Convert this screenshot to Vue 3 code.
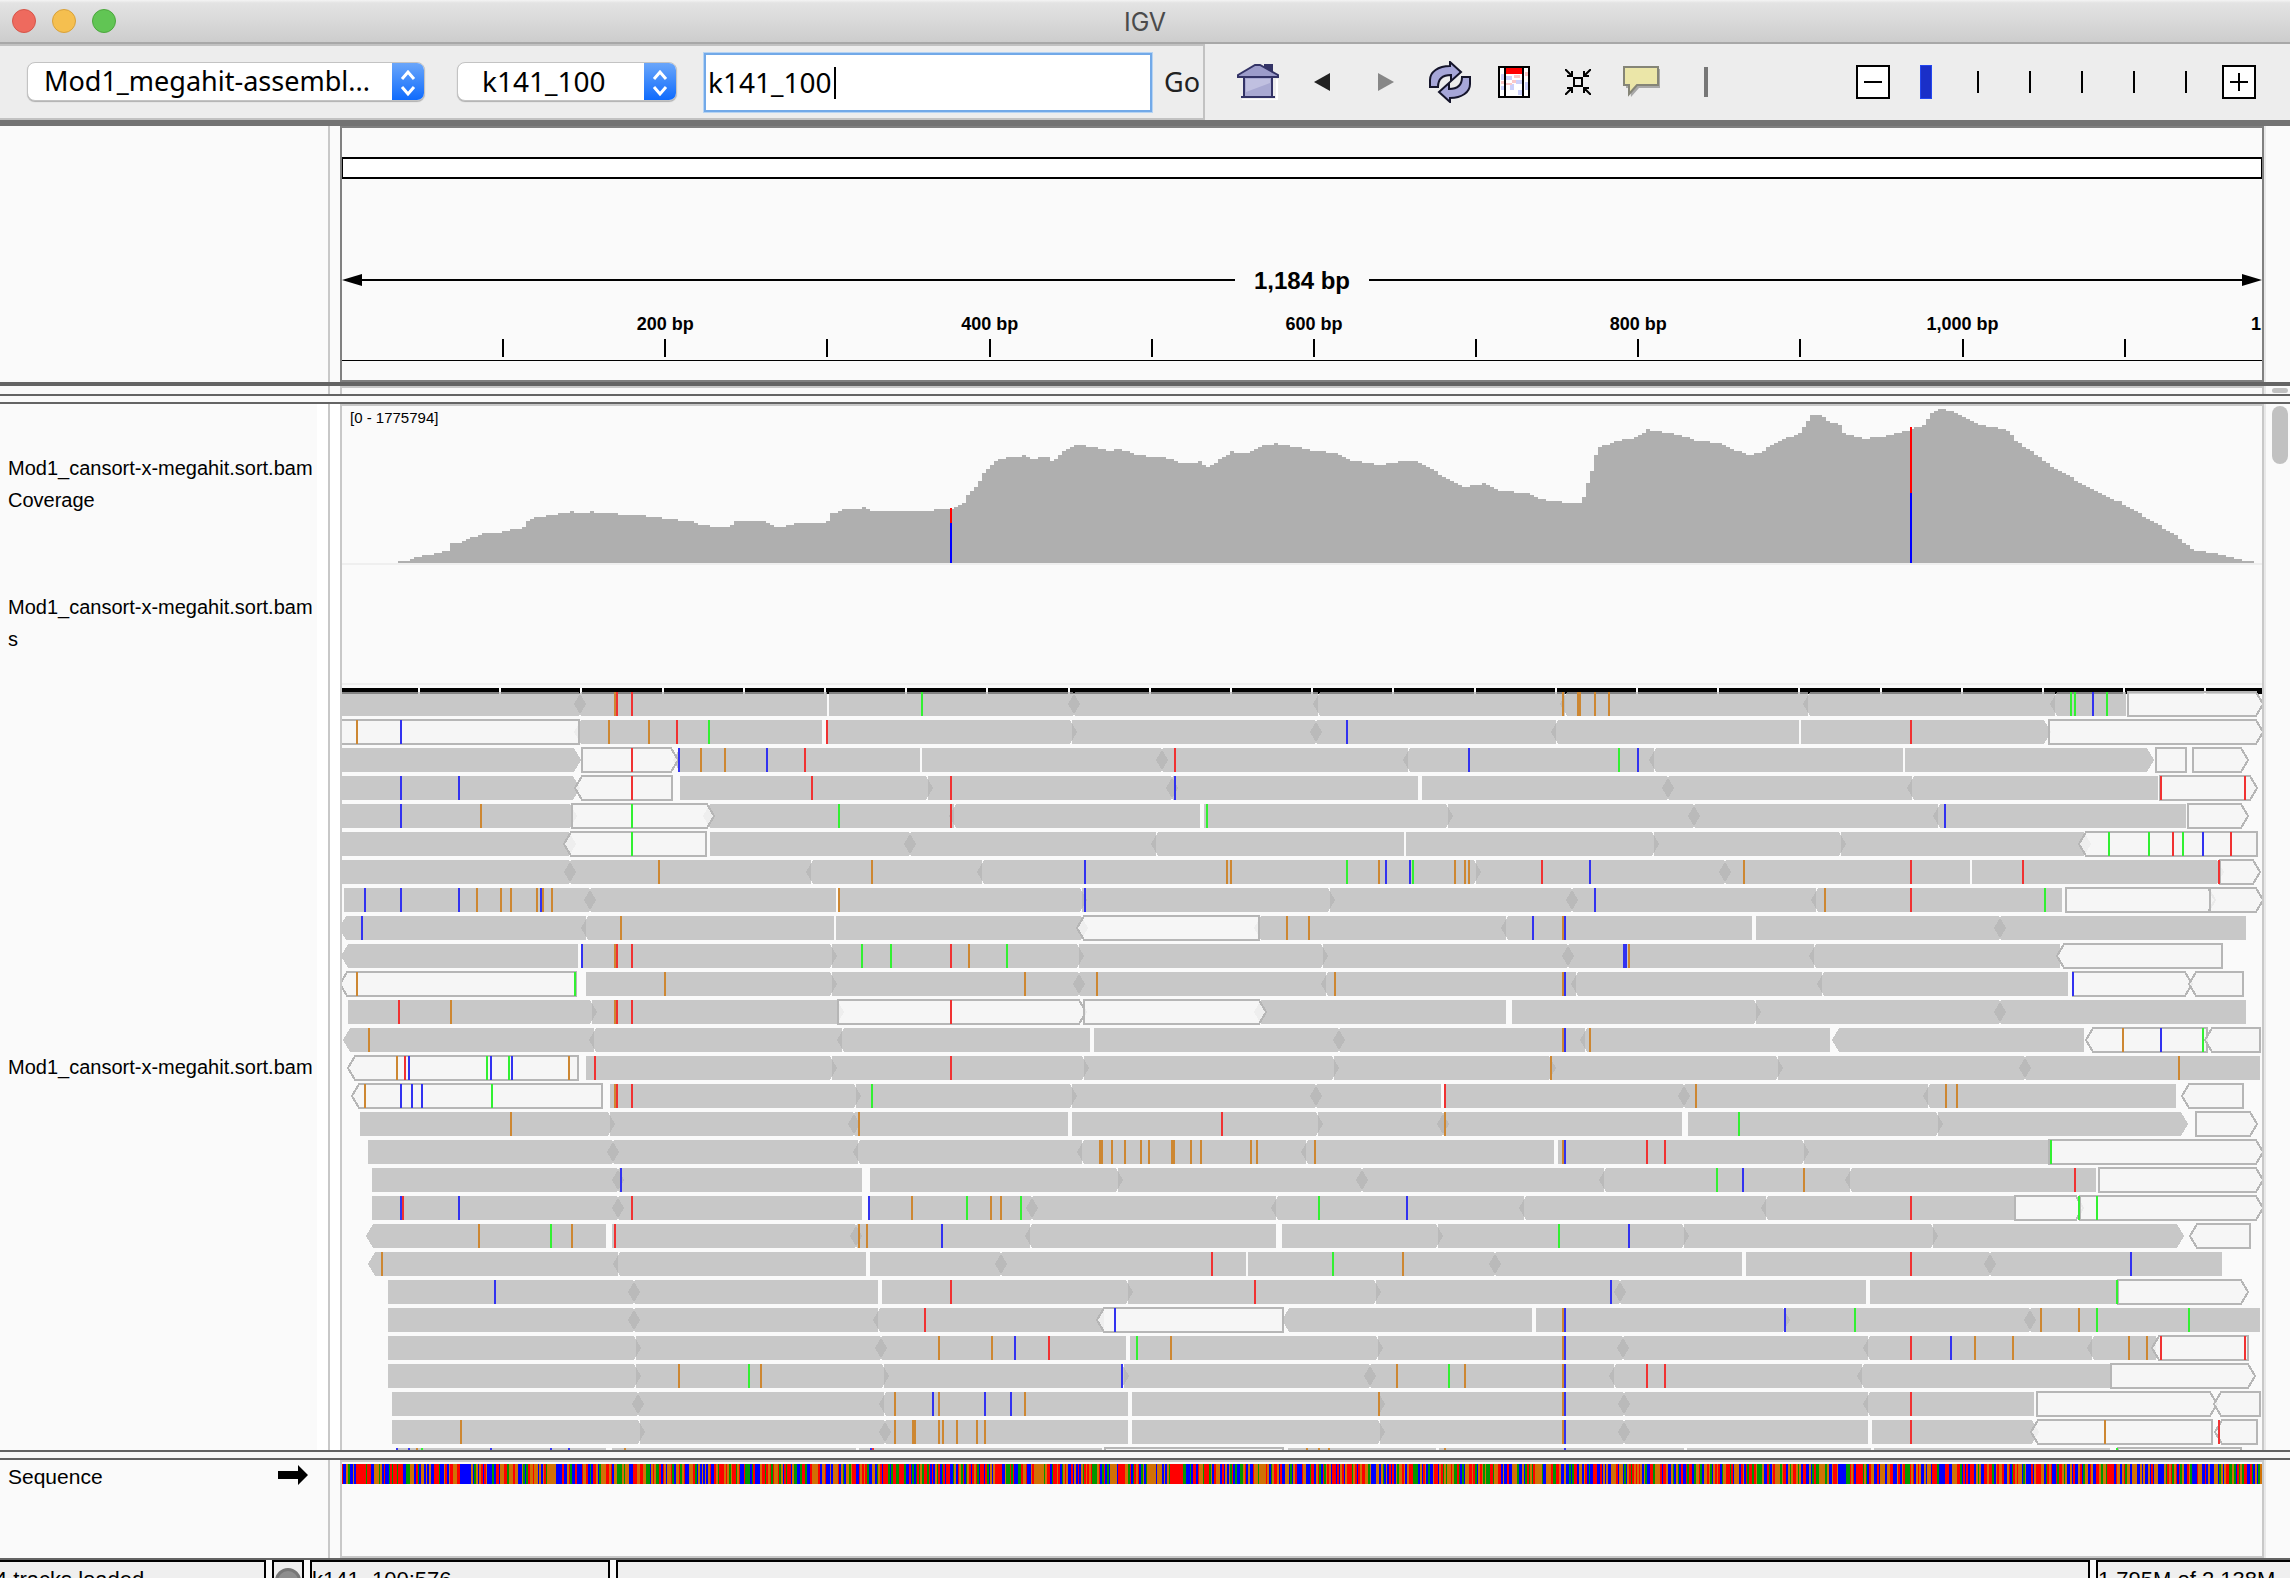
<script setup>
import { ref } from 'vue'

const genome = ref('Mod1_megahit-assembl...')
const contig = ref('k141_100')
const locus = ref('k141_100')
const zoom = ref(0)

const SPAN = 1184
const VIEW = 1920
const rulerTicks = Array.from({ length: 12 }, (_, i) => (i + 1) * 100).map((bp) => ({
  bp,
  left: (bp / SPAN) * 100 + '%',
  label: bp % 200 === 0 ? bp.toLocaleString('en-US') + ' bp' : ''
}))

/* Coverage profile: x, height pairs */
const profile = [
  [0, 0], [55, 0], [56, 1], [66, 3], [72, 5], [80, 7], [90, 9], [105, 13], [108, 19], [118, 21], [126, 25], [134, 27], [140, 29],
  [160, 31], [166, 33], [179, 35], [182, 39], [186, 43], [190, 45], [202, 47], [216, 49], [218, 51], [224, 49], [228, 51],
  [236, 49], [248, 51], [266, 49], [270, 51], [274, 49], [302, 47], [318, 45], [332, 43], [348, 41], [352, 39], [364, 37],
  [376, 35], [388, 37], [392, 41], [398, 43], [420, 41], [424, 39], [428, 37], [436, 35], [444, 37], [450, 39], [484, 41],
  [488, 49], [498, 53], [520, 55], [524, 53], [548, 51], [578, 52], [609, 55], [619, 59], [625, 69], [632, 75], [639, 88],
  [647, 96], [654, 104], [680, 107], [690, 103], [702, 107], [710, 101], [721, 112], [731, 118], [753, 116], [764, 112],
  [775, 114], [791, 109], [800, 107], [822, 105], [831, 102], [844, 99], [856, 101], [864, 96], [879, 105], [888, 111],
  [902, 110], [917, 117], [932, 119], [958, 115], [968, 112], [994, 110], [1009, 102], [1038, 98], [1053, 101], [1072, 101],
  [1086, 95], [1104, 83], [1118, 76], [1140, 79], [1155, 73], [1184, 69], [1194, 64], [1228, 60], [1238, 60], [1241, 70],
  [1248, 92], [1254, 115], [1272, 122], [1289, 125], [1304, 133], [1330, 129], [1345, 125], [1355, 122], [1374, 120], [1396, 111],
  [1403, 108], [1418, 110], [1425, 117], [1440, 124], [1454, 128], [1469, 149], [1478, 147], [1487, 139], [1495, 140],
  [1501, 129], [1520, 124], [1542, 127], [1568, 134], [1580, 137], [1587, 150], [1598, 155], [1618, 147], [1630, 140],
  [1641, 137], [1663, 134], [1673, 121], [1688, 112], [1710, 95], [1739, 79], [1776, 61], [1805, 44], [1834, 26],
  [1849, 13], [1871, 10], [1893, 4], [1915, 0], [1920, 0]
]
const BASE = 157
function heightAt(x) {
  const i = profile.findIndex((p) => p[0] >= x)
  if (i <= 0) return profile[0][1]
  const [x0, h0] = profile[i - 1]
  const [x1, h1] = profile[i]
  return h0 + ((h1 - h0) * (x - x0)) / (x1 - x0)
}
let coveragePath = `M0 ${BASE}`
for (let x = 0; x < VIEW; x += 4) {
  const h = Math.round(heightAt(x) / 2) * 2
  coveragePath += `V${BASE - h}H${x + 4}`
}
coveragePath += `V${BASE}Z`

/*
 * Read rows. "reads" holds runs of packed reads: [x flat start, <x arrow start,
 * ]x flat end, >x arrow end; between them D (both arrows overlap), L (left arrow),
 * R (right arrow) and Gx:w (a gap). "open" holds low-quality reads as x0,x1 with
 * l, r or n for the arrow side. "snps" holds the mismatched bases.
 */
const rowData = [
  { reads: '[0 D238 G485:2 D732 L976 L1223 L1466 L1713 ]1784', open: '1786,1921r', snps: 'o273 r275 r290 g580 o1221 o1236 o1238 o1253 o1267 g1729 g1733 b1751 g1765' },
  { reads: '<232 G480:5 R730 D974 L1214 G1457:2 >1709', open: '-4,237n 1707,1921r', snps: 'o15 b59 o267 o307 r335 g367 r485 b1005 r1569' },
  { reads: '[0 >239 <331 G578:2 D820 L1066 L1312 G1561:2 >1812', open: '240,336r 1814,1844n 1851,1906r', snps: 'r290 b337 o359 o383 b425 r463 r833 b1127 g1277 b1296' },
  { reads: '[0 >238 [338 R586 D830 G1076:4 D1326 L1570 ]1816', open: '233,330l 1818,1915r', snps: 'b59 b117 r290 r470 r609 b833 r1819 r1903' },
  { reads: '[0 >235 <361 L612 G858:4 R1106 D1352 L1596 ]1844', open: '230,372r 1846,1906r', snps: 'b59 o139 g290 g497 r609 g865 b1603' },
  { reads: '[0 >234 [368 D568 L814 G1062:2 R1312 R1499 >1749', open: '222,364l 1737,1915l', snps: 'g290 g1767 g1807 r1831 g1841 b1861 r1889' },
  { reads: '[0 D228 L469 L640 R1134 D1383 G1628:2 >1882', open: '1878,1918r', snps: 'o317 o530 b743 o885 o889 g1005 o1037 b1044 b1068 g1071 o1113 o1123 o1127 r1200 b1248 o1402 r1569 r1681 r1877' },
  { reads: '[2 D248 G494:2 R740 R988 D1230 L1474 ]1720', open: '1724,1873r 1868,1921r', snps: 'b23 b59 b117 o135 o159 o169 o195 o201 b199 o210 o497 b743 b1253 o1483 r1569 g1703' },
  { reads: '<-3 L244 G492:2 >746 <912 L1164 G1410:4 D1658 ]1904', open: '735,917l', snps: 'b20 o279 o945 o967 b1191 o1221 b1223' },
  { reads: '<-1 G236:4 R490 R737 R981 D1226 L1472 ]1718', open: '1715,1880l', snps: 'b240 o273 r275 r290 g520 g549 r609 o627 g665 b1282 b1284 o1287' },
  { reads: '[244 R490 D737 L984 L1234 L1480 ]1726', open: '-2,234l 1731,1850r 1847,1901l', snps: 'o15 g233 o323 o683 o755 o993 o1221 b1223 b1731' },
  { reads: '[6 R250 >502 <912 G1164:6 R1414 D1658 ]1904', open: '496,744r 742,924r', snps: 'r57 o109 o273 r275 r290 r609' },
  { reads: '<1 L252 L500 G748:4 D997 L1243 ]1488 <1490 ]1742', open: '1744,1865l 1863,1918l', snps: 'o27 o1221 b1223 o1248 o1781 b1819 g1861' },
  { reads: '[244 R490 R742 R992 R1209 R1436 D1683 ]1918', open: '6,236l', snps: 'o55 r63 b67 g145 b149 g167 b170 o227 r253 r609 o1209 o1837' },
  { reads: '[268 R514 R730 D974 G1099:3 D1342 L1586 ]1834', open: '10,260l 1840,1901l', snps: 'o23 b59 b70 b80 g150 o273 r275 r290 g530 r1103 o1354 o1604 o1615' },
  { reads: '[18 R268 D512 G726:4 R976 D1101 G1340:6 R1596 >1846', open: '1854,1915r', snps: 'o169 o517 r880 o1103 g1397' },
  { reads: '[26 D271 L516 L740 L964 G1212:4 R1462 ]1707', open: '1707,1921r', snps: 'o758 o760 o770 o783 o799 o807 o830 o832 o849 o859 o909 o915 o973 o1221 b1223 r1305 r1323 g1709' },
  { reads: '[30 D276 G520:8 R776 D1020 L1262 L1508 ]1754', open: '1757,1921r', snps: 'b279 g1375 b1401 o1462 r1733' },
  { reads: '[30 D276 G520:6 D690 L934 L1182 L1424 ]1672', open: '1673,1741r 1738,1921r', snps: 'b59 r61 b117 r290 b527 o570 g625 o649 o659 g679 g977 b1065 r1569 g1737 g1755' },
  { reads: '<24 G264:6 D514 L688 G934:6 R1096 R1342 R1591 >1842', open: '1848,1908l', snps: 'o137 g209 o230 r273 o517 o525 b600 g1217 b1287' },
  { reads: '<26 L276 G524:4 D659 G904:2 D1153 G1400:4 D1648 ]1880', open: '', snps: 'o40 r870 g991 o1061 r1569 b1789' },
  { reads: '[46 D292 G536:4 R786 R1034 D1278 G1524:4 ]1776', open: '1776,1906r', snps: 'b153 r609 r913 b1269 g1775' },
  { reads: '[46 D292 L536 ]762 <940 G1190:4 R1443 D1688 ]1918', open: '755,941l', snps: 'r583 b773 o1221 b1223 b1443 g1513 o1699 o1737 g1755 g1847' },
  { reads: '[46 R294 D539 G784:4 R1036 D1281 L1526 L1750 ]1814', open: '1810,1906l', snps: 'o597 o650 b673 r707 g795 o829 o1221 b1223 r1569 b1609 o1633 o1671 o1787 o1805 r1819 r1903' },
  { reads: '[46 R294 R542 R782 D1028 L1272 L1520 ]1768', open: '1769,1913r', snps: 'o337 g407 o419 b780 o1055 g1107 o1123 o1221 b1223 r1305 r1323' },
  { reads: '[50 D296 L542 G786:4 R1038 D1282 L1526 ]1692', open: '1695,1875r 1872,1918l', snps: 'o553 b591 o597 b643 b669 o683 o1037 o1221 b1223 r1569' },
  { reads: '[50 R298 D543 G786:4 R1038 D1282 G1526:4 >1697', open: '1689,1870l 1873,1915l', snps: 'o119 o553 o571 o573 o597 o601 o615 o635 o643 o1221 b1223 r1569 o1763 r1877' },
  { reads: '<48 G264:6 G514:3 ]760 [946 G1094:3 G1342:3 G1529:3 ]1768', open: '763,941n 1776,1899n', snps: 'b55 b67 o75 g80 b149 b209 b227 o283 b529 r531 o965 o977 o987 o1103 b1223 g1775' }
]

const TIP = 7
const H = 24
function outline(x0, x1, side) {
  if (side === 'l') return `M${x0} ${H / 2}L${x0 + TIP} 0H${x1}V${H}H${x0 + TIP}Z`
  if (side === 'r') return `M${x0} 0H${x1 - TIP}L${x1} ${H / 2}L${x1 - TIP} ${H}H${x0}Z`
  if (side === 'b') return `M${x0} ${H / 2}L${x0 + TIP} 0H${x1 - TIP}L${x1} ${H / 2}L${x1 - TIP} ${H}H${x0 + TIP}Z`
  return `M${x0} 0H${x1}V${H}H${x0}Z`
}
function parseReads(text) {
  const out = []
  let start = 0
  let arrow = false
  const close = (x, tip) => out.push(outline(start, x, arrow ? (tip ? 'b' : 'l') : tip ? 'r' : 'n'))
  const open = (x, tip) => {
    start = x
    arrow = tip
  }
  for (const token of text.split(' ')) {
    const [x, gap] = token.slice(1).split(':').map(Number)
    const kind = token[0]
    if (kind === '[') open(x, false)
    else if (kind === '<') open(x, true)
    else if (kind === ']') close(x, false)
    else if (kind === '>') close(x, true)
    else if (kind === 'D') { close(x + 6, true); open(x - 6, true) }
    else if (kind === 'L') { close(x, false); open(x - 5, true) }
    else if (kind === 'R') { close(x + 5, true); open(x, false) }
    else { close(x, false); open(x + gap, false) }
  }
  return out
}
const rows = rowData.map((row) => ({
  reads: parseReads(row.reads),
  open: row.open ? row.open.split(' ').map((t) => {
    const [x0, x1] = t.slice(0, -1).split(',').map(Number)
    return outline(x0, x1, t.slice(-1))
  }) : [],
  snps: row.snps.split(' ').map((t) => ({ base: t[0], x: Number(t.slice(1)) - 1 }))
}))
const barMarks = Array.from({ length: 23 }, (_, i) => Math.round(77 + i * 81.2))

/* Reference sequence, one coloured band per base */
const basePaths = { g: '', r: '', b: '', o: '' }
let seed = 141100
for (let i = 0; i < SPAN; i++) {
  seed = (seed * 1103515245 + 12345) % 2147483648
  const n = seed / 2147483648
  const base = n < 0.16 ? 'g' : n < 0.43 ? 'r' : n < 0.71 ? 'b' : 'o'
  const x0 = Math.floor((i * VIEW) / SPAN)
  const x1 = Math.floor(((i + 1) * VIEW) / SPAN)
  basePaths[base] += `M${x0} 0H${x1}V20H${x0}Z`
}
</script>

<template>
  <div class="window">
    <header class="titlebar">
      <div class="lights">
        <button class="light close" aria-label="Close"></button>
        <button class="light minimise" aria-label="Minimise"></button>
        <button class="light expand" aria-label="Zoom"></button>
      </div>
      <h1>IGV</h1>
    </header>

    <div class="toolbar">
      <form class="locus" @submit.prevent>
        <div class="combo genome">
          <select v-model="genome" aria-label="Genome"><option>Mod1_megahit-assembl...</option></select>
          <svg class="chev" viewBox="0 0 32 39"><path d="M10 16l6-7 6 7M10 24l6 7 6-7" /></svg>
        </div>
        <div class="combo contig">
          <select v-model="contig" aria-label="Contig"><option>k141_100</option></select>
          <svg class="chev" viewBox="0 0 32 39"><path d="M10 16l6-7 6 7M10 24l6 7 6-7" /></svg>
        </div>
        <div class="field">
          <input v-model="locus" type="text" aria-label="Locus" />
          <i class="caret"></i>
        </div>
        <button class="go" type="submit">Go</button>
      </form>

      <nav class="tools">
        <button aria-label="Home">
          <svg width="42" height="36" viewBox="0 0 42 36">
            <path d="M5 36H40V15" fill="none" stroke="#fff" stroke-width="2" />
            <path d="M28 8V1h7v10z" fill="#333366" stroke="#333366" stroke-width="2" />
            <path d="M7 13h28v20H7z" fill="#a9a9d2" stroke="#333366" stroke-width="2" />
            <path d="M9 15h24v4l-24 9z" fill="#c0c0e0" />
            <path d="M1 11L18 1h5l18 10v2H1z" fill="#9c9cca" stroke="#333366" stroke-width="2" />
            <path d="M4 33h34" stroke="#333366" stroke-width="2" />
          </svg>
        </button>
        <button aria-label="Back"><svg width="16" height="18" viewBox="0 0 16 18"><path d="M16 0v18L0 9z" fill="#222" /></svg></button>
        <button aria-label="Forward"><svg width="16" height="18" viewBox="0 0 16 18"><path d="M0 0v18l16-9z" fill="#878787" /></svg></button>
        <button aria-label="Refresh">
          <svg width="42" height="42" viewBox="0 0 42 42" fill="#a6a6d8" stroke="#15152b" stroke-width="2">
            <path d="M1 26v-7C1 11 9 5 21 5V1l11 10-10 9v-6c-8 0-13 4-13 12z" />
            <path d="M41 16v7c0 8-8 14-20 14v4L10 31l10-9v6c8 0 13-4 13-12z" />
          </svg>
        </button>
        <button aria-label="Define region">
          <svg width="32" height="32" viewBox="0 0 32 32">
            <path d="M1 1h30v30H1z" fill="#fff" />
            <path d="M8 10h6v4H8zM18 14h6v4h-6zM12 18h4v6h-4zM20 24h4v5h-4zM3 8h3v6H3zM27 16h3v8h-3zM3 20h3v4H3z" fill="#ccd0fa" />
            <path d="M16 9h6v3h-6zM8 17h6v2H8zM14 14h4v3h-4zM27 6h3v4h-3zM3 15h3v3H3z" fill="#fac8c8" />
            <path d="M8 2h16v6H8z" fill="#f00" />
            <path d="M1 1h30v30H1zM7 1v30M25 1v30" fill="none" stroke="#000" stroke-width="2" />
          </svg>
        </button>
        <button aria-label="Fit data">
          <svg width="26" height="26" viewBox="0 0 26 26" fill="none" stroke="#000" stroke-width="2">
            <path d="M9 9h8v8H9zM0 0l7 7M26 0l-7 7M0 26l7-7M26 26l-7-7M7 2v5H2M19 2v5h5M7 24v-5H2M19 24v-5h5" />
          </svg>
        </button>
        <button aria-label="Popup text">
          <svg width="38" height="32" viewBox="0 0 38 32">
            <path d="M3 3h34v19H16l-8 9-1-9H3z" fill="#a8a8a8" />
            <path d="M1 1h34v18H14l-8 9V19H1z" fill="#ebe6a8" stroke="#858577" stroke-width="2" />
          </svg>
        </button>
        <button aria-label="Center line"><svg width="4" height="30" viewBox="0 0 4 30"><path d="M0 0h4v30H0z" fill="#777" /></svg></button>
      </nav>

      <div class="zoomer">
        <button aria-label="Zoom out"><svg width="34" height="34" viewBox="0 0 34 34"><path d="M1 1h32v32H1z" /><path d="M8 17h18" /></svg></button>
        <input v-model="zoom" type="range" min="0" max="5" aria-label="Zoom level" />
        <button aria-label="Zoom in"><svg width="34" height="34" viewBox="0 0 34 34"><path d="M1 1h32v32H1z" /><path d="M8 17h18M17 8v18" /></svg></button>
      </div>
    </div>

    <section class="band ruler-band">
      <div class="names"></div>
      <div class="panel ruler">
        <div class="ideogram"></div>
        <div class="span">
          <svg width="20" height="12" viewBox="0 0 20 12"><path d="M0 6L20 0v12z" /></svg>
          <i></i><strong>1,184 bp</strong><i></i>
          <svg width="20" height="12" viewBox="0 0 20 12"><path d="M20 6L0 0v12z" /></svg>
        </div>
        <div class="scale">
          <div v-for="t in rulerTicks" :key="t.bp" class="tick" :style="{ left: t.left }">
            <span>{{ t.label }}</span><i></i>
          </div>
        </div>
      </div>
      <div class="side"></div>
    </section>

    <section class="band spare-band">
      <div class="names"></div>
      <div class="panel"></div>
      <div class="side"><i class="knob"></i></div>
    </section>
    <div class="divider"></div>

    <section class="band data-band">
      <div class="names">
        <div class="name coverage">Mod1_cansort-x-megahit.sort.bam<br />Coverage</div>
        <div class="name junctions">Mod1_cansort-x-megahit.sort.bam<br />s</div>
        <div class="name reads">Mod1_cansort-x-megahit.sort.bam</div>
      </div>
      <div class="panel">
        <div class="track coverage">
          <span class="range">[0 - 1775794]</span>
          <svg viewBox="0 0 1920 157" preserveAspectRatio="none">
            <path :d="coveragePath" fill="#afafaf" />
            <path d="M608 102h2v15h-2zM1568 21h2v66h-2z" fill="#f00" />
            <path d="M608 117h2v40h-2zM1568 87h2v70h-2z" fill="#00f" />
          </svg>
        </div>
        <div class="track junctions"></div>
        <div class="track reads">
          <svg viewBox="0 0 1920 791" preserveAspectRatio="none">
            <path d="M0 3H1920V9H0z" />
            <path v-for="x in barMarks" :key="x" :d="`M${x - 1} 3h2v6h-2z`" fill="#fafafa" />
            <g v-for="(row, i) in rows" :key="i" :transform="`translate(0 ${7 + i * 28})`">
              <path v-for="(d, k) in row.reads" :key="'r' + k" :d="d" class="read" />
              <path v-for="(d, k) in row.open" :key="'o' + k" :d="d" class="open" />
              <rect v-for="(s, k) in row.snps" :key="'s' + k" :class="s.base" :x="s.x" y="0" width="2" height="24" />
            </g>
          </svg>
        </div>
      </div>
      <div class="side"><i class="knob"></i></div>
    </section>
    <div class="divider"></div>

    <section class="band sequence-band">
      <div class="names">
        <span>Sequence</span>
        <svg width="30" height="20" viewBox="0 0 30 20"><path d="M0 6h20V0l10 10-10 10v-6H0z" /></svg>
      </div>
      <div class="panel">
        <svg viewBox="0 0 1920 20" preserveAspectRatio="none">
          <path v-for="(d, base) in basePaths" :key="base" :class="base" :d="d" />
        </svg>
      </div>
      <div class="side"></div>
    </section>

    <footer class="status">
      <div class="loaded"><span>4 tracks loaded</span></div>
      <div class="lamp"><i></i></div>
      <div class="position">k141_100:576</div>
      <div class="message"></div>
      <div class="memory">1,795M of 2,138M</div>
    </footer>
  </div>
</template>

<style>
body {
  margin: 0;
}
</style>

<style scoped>
* {
  box-sizing: border-box;
}
.window {
  height: 100vh;
  display: flex;
  flex-direction: column;
  overflow: hidden;
  background: #fafafa;
  color: #000;
  font-family: "Liberation Sans", Arial, sans-serif;
  font-size: 20px;
}
button {
  padding: 0;
  border: 0;
  background: none;
}
svg {
  display: block;
}
.titlebar {
  flex: none;
  display: grid;
  grid-template-columns: 1fr auto 1fr;
  align-items: center;
  height: 44px;
  border-bottom: 2px solid #a8a8a8;
  background: linear-gradient(#f4f4f4 0, #e3e3e3 3px, #cdcdcd);
}
.titlebar h1 {
  margin: 0;
  padding-top: 2px;
  font: 400 25px/30px Inter, sans-serif;
  color: #4b4b4b;
}
.lights {
  display: flex;
  gap: 16px;
  padding-left: 12px;
}
.light {
  width: 24px;
  height: 24px;
  border: 1px solid #d65549;
  border-radius: 50%;
  background: #ee6a5e;
}
.light.minimise {
  border-color: #d8a13a;
  background: #f5bf4f;
}
.light.expand {
  border-color: #4ca73d;
  background: #61c554;
}
.toolbar {
  flex: none;
  display: flex;
  height: 82px;
  border-bottom: 6px solid #737373;
  background: #ededed;
  font-family: "Noto Sans", sans-serif;
}
.locus {
  display: flex;
  align-items: center;
  width: 1205px;
  padding-left: 27px;
  border: 2px solid #c2c2c2;
  border-left: 0;
}
.combo {
  display: flex;
  height: 39px;
  margin-bottom: 2px;
  overflow: hidden;
  border: 1px solid #c3c3c3;
  border-radius: 8px;
  background: #fff;
  box-shadow: 0 1px 1px #b0b0b0;
}
.combo select {
  flex: 1;
  min-width: 0;
  padding: 0 0 0 16px;
  border: 0;
  appearance: none;
  background: none;
  color: #000;
  font: 27px/36px "Noto Sans", sans-serif;
}
.combo.genome {
  width: 398px;
  margin-right: 32px;
}
.combo.contig {
  width: 220px;
  margin-right: 27px;
}
.combo.contig select {
  padding-left: 24px;
  font-size: 28px;
}
.chev {
  flex: none;
  width: 32px;
  height: 39px;
  background: linear-gradient(#6aa6fa, #0a68fd);
  fill: none;
  stroke: #fff;
  stroke-width: 3;
}
.field {
  position: relative;
  width: 448px;
  margin-right: 12px;
}
.field input {
  width: 100%;
  height: 59px;
  padding: 0 2px;
  border: 2px solid #72a9e8;
  outline: 1px solid #b5d3f3;
  background: #fff;
  color: #000;
  font: 28px/38px "Noto Sans", sans-serif;
}
.caret {
  position: absolute;
  left: 130px;
  top: 14px;
  width: 2px;
  height: 32px;
  background: #000;
}
.go {
  font: 27px/36px "Noto Sans", sans-serif;
  color: #222;
}
.tools {
  display: flex;
  padding-left: 21px;
}
.tools button {
  width: 64px;
  display: grid;
  place-items: center;
}
.zoomer {
  display: flex;
  align-items: center;
  margin-left: auto;
  padding-right: 34px;
}
.zoomer svg {
  fill: #fff;
  stroke: #000;
  stroke-width: 2;
}
.zoomer input {
  width: 302px;
  height: 34px;
  margin: 0 0 0 30px;
  appearance: none;
  background: repeating-linear-gradient(90deg, transparent 0 50px, #000 50px 52px) 7px 6px / 260px 22px no-repeat;
}
.zoomer input::-webkit-slider-thumb {
  appearance: none;
  width: 12px;
  height: 34px;
  border: 1px solid #2347f0;
  background: #1a2fc8;
}
.band {
  flex: none;
  display: flex;
}
.names {
  flex: none;
  width: 330px;
  border-right: 2px solid #c8c8c8;
}
.panel {
  flex: 1;
  min-width: 0;
  margin-left: 10px;
  overflow: hidden;
  border: 2px solid #c8c8c8;
  border-bottom: 0;
}
.side {
  flex: none;
  width: 26px;
  padding: 2px 0 0 6px;
  border-left: 2px solid #e8e8e8;
}
.knob {
  display: block;
  width: 16px;
  height: 58px;
  border-radius: 8px;
  background: #c1c1c1;
}
.ruler-band {
  height: 260px;
  border-bottom: 4px solid #646464;
}
.ruler {
  border: 2px solid #808080;
}
.ideogram {
  height: 22px;
  margin-top: 29px;
  border: 2px solid #000;
  border-width: 2px 1px;
  background: #fff;
}
.span {
  display: flex;
  align-items: center;
  height: 32px;
  margin-top: 85px;
}
.span i {
  flex: 1;
  height: 2px;
  background: #000;
}
.span strong {
  padding: 2px 19px 0;
  font-size: 24px;
}
.scale {
  position: relative;
  height: 49px;
  margin-top: 16px;
  border-bottom: 1px solid #000;
}
.tick {
  position: absolute;
  top: 0;
  width: 120px;
  margin-left: -61px;
  font-size: 18px;
  font-weight: 700;
  text-align: center;
}
.tick span {
  display: block;
  height: 27px;
  line-height: 24px;
}
.tick i {
  display: block;
  width: 2px;
  height: 18px;
  margin: 0 auto;
  background: #000;
}
.spare-band {
  height: 10px;
  border-bottom: 2px solid #646464;
}
.spare-band .knob {
  height: 5px;
}
.divider {
  flex: none;
  height: 8px;
  border-bottom: 2px solid #646464;
}
.data-band {
  flex: 1;
  min-height: 0;
  background: #fff;
  border-bottom: 2px solid #646464;
}
.data-band .names {
  display: flex;
  flex-direction: column;
}
.data-band .panel {
  display: flex;
  flex-direction: column;
  background: #fafafa;
}
.data-band .side {
  background: #fafafa;
}
.name {
  display: flow-root;
  width: 317px;
  padding-left: 8px;
  overflow: hidden;
  background: #fafafa;
  line-height: 32px;
  white-space: nowrap;
  align-content: center;
}
.coverage {
  flex: none;
  height: 159px;
}
.junctions {
  flex: none;
  height: 120px;
}
.reads {
  flex: 1;
  min-height: 0;
}
.track {
  position: relative;
  overflow: hidden;
}
.track.coverage,
.track.junctions {
  border-bottom: 2px solid #efefef;
}
.range {
  position: absolute;
  left: 8px;
  top: 3px;
  font-size: 15px;
  line-height: 18px;
}
.track svg {
  width: 100%;
  shape-rendering: crispEdges;
}
.track.coverage svg {
  height: 157px;
}
.track.reads svg {
  height: 791px;
}
.read {
  fill: rgba(180, 180, 180, 0.72);
}
.open {
  fill: rgba(245, 245, 245, 0.85);
  stroke: #b6b6b6;
  stroke-width: 2;
}
.track .r {
  fill: #f03232;
}
.track .g {
  fill: #32f032;
}
.track .b {
  fill: #3232f0;
}
.track .o {
  fill: #cd8732;
}
.sequence-band {
  height: 100px;
  border-bottom: 2px solid #646464;
}
.sequence-band .names {
  display: flex;
  justify-content: space-between;
  align-items: flex-start;
  padding: 5px 20px 0 8px;
  font-size: 21px;
  line-height: 24px;
}
.sequence-band .panel {
  padding-top: 2px;
  border-bottom: 2px solid #c8c8c8;
}
.sequence-band .panel svg {
  width: 100%;
  height: 20px;
  shape-rendering: crispEdges;
}
.sequence-band .g {
  fill: #009600;
}
.sequence-band .r {
  fill: #f00;
}
.sequence-band .b {
  fill: #00f;
}
.sequence-band .o {
  fill: #d17105;
}
.status {
  flex: none;
  display: flex;
  gap: 6px;
  height: 18px;
  overflow: hidden;
  font-size: 22px;
  line-height: 24px;
}
.status > div {
  flex: none;
  height: 40px;
  padding-top: 6px;
  overflow: hidden;
  border: 2px solid #000;
  background: #efefef;
  white-space: nowrap;
}
.status .loaded {
  display: flex;
  width: 266px;
  border-left: 0;
}
.loaded span {
  margin-left: -5px;
}
.status .lamp {
  width: 32px;
}
.lamp i {
  display: block;
  width: 26px;
  height: 26px;
  margin: 0 auto;
  border: 3px solid #777;
  border-radius: 50%;
  background: #8e8e8e;
}
.status .position {
  width: 300px;
}
.status .message {
  flex: 1;
}
.status .memory {
  width: 194px;
  border-right: 0;
}
</style>
